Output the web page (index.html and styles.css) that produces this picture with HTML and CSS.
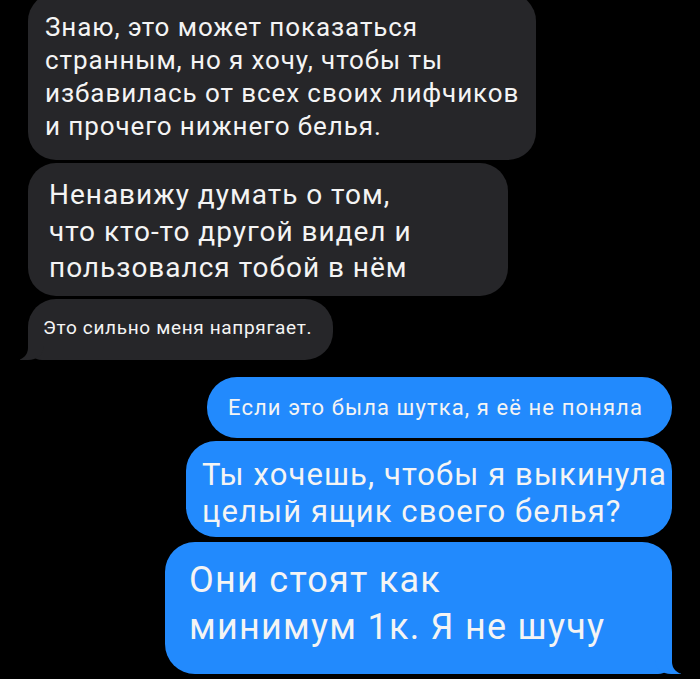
FILE: index.html
```html
<!DOCTYPE html>
<html lang="ru">
<head>
<meta charset="utf-8">
<title>Переписка</title>
<link rel="stylesheet" href="styles.css">
</head>
<body>
<main class="thread">
  <div class="bubble in in-1">Знаю, это может показаться<br>странным, но я хочу, чтобы ты<br>избавилась от всех своих лифчиков<br>и прочего нижнего белья.</div>
  <div class="bubble in in-2">Ненавижу думать о том,<br>что кто-то другой видел и<br>пользовался тобой в нём</div>
  <div class="bubble in in-3 tail-left">Это сильно меня напрягает.</div>

  <div class="bubble out out-1">Если это была шутка, я её не поняла</div>
  <div class="bubble out out-2">Ты хочешь, чтобы я выкинула<br>целый ящик своего белья?</div>
  <div class="bubble out out-3 tail-right">Они стоят как<br>минимум 1к. Я не шучу</div>
</main>
</body>
</html>
```
FILE: styles.css
```css
html, body {
  margin: 0;
  padding: 0;
  background: #000;
}

body {
  width: 700px;
  height: 679px;
  overflow: hidden;
  font-family: Roboto, "Noto Sans", sans-serif;
  color: #f4f4f4;
}

.thread {
  display: flex;
  flex-direction: column;
}

.bubble {
  position: relative;
  box-sizing: border-box;
  white-space: nowrap;
  letter-spacing: 0.035em;
}

/* incoming (grey) */
.in {
  align-self: flex-start;
  margin-left: 28px;
  background: #262629;
  border-radius: 28px;
}

.in-1 {
  width: 508px;
  margin-top: -7px;
  padding: 18px 0 17px 17px;
  font-size: 26px;
  line-height: 33px;
}

.in-2 {
  width: 480px;
  margin-top: 3px;
  padding: 14px 0 9px 21px;
  font-size: 28px;
  line-height: 36.5px;
}

.in-3 {
  width: 305px;
  margin-top: 3px;
  padding: 17px 0 20px 15px;
  font-size: 19px;
  line-height: 24px;
  border-radius: 28px 28px 28px 14px;
}

/* outgoing (blue) */
.out {
  align-self: flex-end;
  margin-right: 28px;
  background: #228afd;
  border-radius: 30px;
}

.out-1 {
  width: 465px;
  margin-top: 17px;
  padding: 18px 0 18px 21px;
  font-size: 22px;
  line-height: 25px;
  letter-spacing: 0.05em;
}

.out-2 {
  width: 486px;
  margin-top: 3px;
  padding: 15px 0 7px 16px;
  font-size: 31px;
  line-height: 37px;
}

.out-3 {
  width: 507px;
  margin-top: 5px;
  padding: 15px 0 23px 24px;
  font-size: 36px;
  line-height: 47px;
  border-radius: 30px 30px 14px 30px;
}

/* bubble tails */
.tail-left::before,
.tail-left::after,
.tail-right::before,
.tail-right::after {
  content: "";
  position: absolute;
  bottom: 0;
  height: 22px;
}

.tail-left::before {
  left: -8px;
  width: 24px;
  background: #262629;
  border-bottom-right-radius: 16px 14px;
}

.tail-left::after {
  left: -14px;
  width: 14px;
  background: #000;
  border-bottom-right-radius: 12px;
}

.tail-right::before {
  right: -9px;
  width: 26px;
  background: #228afd;
  border-bottom-left-radius: 16px 14px;
}

.tail-right::after {
  right: -15px;
  width: 15px;
  background: #000;
  border-bottom-left-radius: 12px;
}
```
